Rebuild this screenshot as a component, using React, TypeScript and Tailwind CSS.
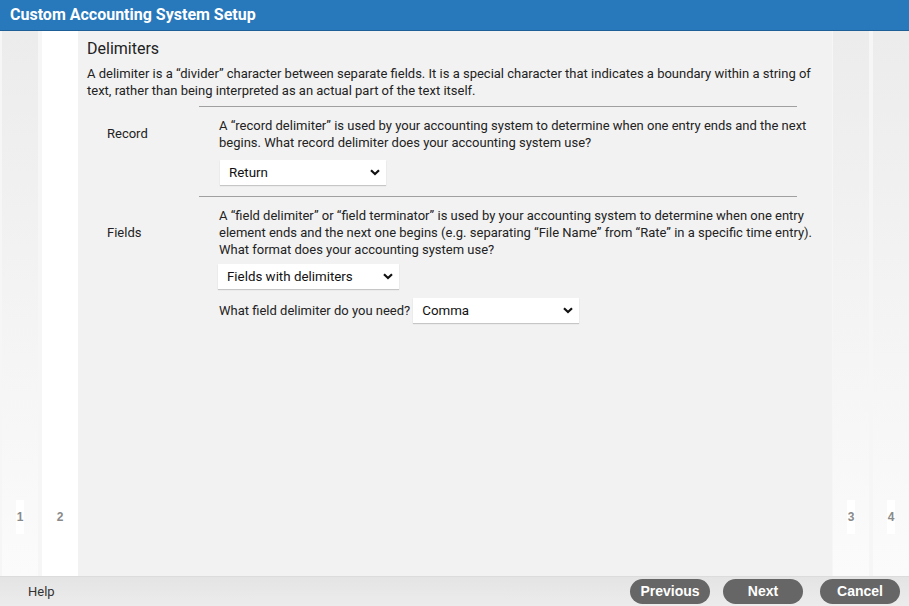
import React from "react";

function Chevron() {
  return (
    <svg width="10" height="7" viewBox="0 0 10 7" className="shrink-0">
      <path d="M1 1.2 L5 5 L9 1.2" fill="none" stroke="#111" strokeWidth="2.2" />
    </svg>
  );
}

function Select({ value, width }: { value: string; width: string }) {
  return (
    <div
      className={`${width} h-[25px] bg-white flex items-center justify-between pl-[9px] pr-[6px] text-[13.33px] font-normal text-[#111] shadow-[0_1px_1px_rgba(0,0,0,0.18)]`}
    >
      <span>{value}</span>
      <Chevron />
    </div>
  );
}

function Tab({ n, active }: { n: number; active?: boolean }) {
  return (
    <div
      className={`w-[36px] flex flex-col items-center justify-end pb-[42px] ${
        active ? "bg-white" : "bg-gradient-to-b from-[#ececec] to-[#fbfbfb]"
      }`}
    >
      <div className="w-[8px] h-[34px] bg-white flex items-center justify-center text-[12px] font-bold text-[#8a8a8a] font-['Liberation_Sans',sans-serif]">
        {n}
      </div>
    </div>
  );
}

export default function App() {
  return (
    <div className="w-[909px] h-[606px] flex flex-col bg-[#f4f4f4] font-['Roboto',sans-serif] text-[#333] overflow-hidden">
      {/* Header */}
      <div className="h-[31px] shrink-0 bg-[#2878bc] border-b border-[#1e5f98] flex items-center pl-[10px]">
        <h1 className="text-white text-[16px] font-bold font-['Roboto',sans-serif]">Custom Accounting System Setup</h1>
      </div>

      {/* Body */}
      <div className="flex-1 flex min-h-0">
        <div className="w-[2px] bg-[#f6f6f6]" />
        <Tab n={1} />
        <div className="w-[4px] bg-[#f6f6f6]" />
        <Tab n={2} active />

        <div className="flex-1 bg-[#f2f2f2] pl-[9px] pr-[9px] pt-[8px]">
          <h2 className="text-[16px] text-[#222] leading-[20px]">Delimiters</h2>
          <p className="text-[13px] leading-[17px] text-[#222] mt-[6px]">
            A delimiter is a “divider” character between separate fields. It is a special character that indicates a boundary within a string of text, rather than being interpreted as an actual part of the text itself.
          </p>
          <div className="ml-[112px] w-[598px] h-px bg-[#a0a0a0] mt-[7px]" />

          {/* Record */}
          <div className="flex mt-[10px]">
            <div className="w-[132px] shrink-0 pl-[20px] flex items-center h-[34px] text-[13px] text-[#222]">Record</div>
            <div className="flex-1">
              <p className="text-[13px] leading-[17px] text-[#222]">
                A “record delimiter” is used by your accounting system to determine when one entry ends and the next begins. What record delimiter does your accounting system use?
              </p>
              <div className="mt-[9px] ml-[1px]">
                <Select value="Return" width="w-[166px]" />
              </div>
            </div>
          </div>
          <div className="ml-[112px] w-[598px] h-px bg-[#a0a0a0] mt-[11px]" />

          {/* Fields */}
          <div className="flex mt-[10px]">
            <div className="w-[132px] shrink-0 pl-[20px] flex items-center h-[51px] text-[13px] text-[#222]">Fields</div>
            <div className="flex-1">
              <p className="text-[13px] leading-[17px] text-[#222]">
                A “field delimiter” or “field terminator” is used by your accounting system to determine when one entry element ends and the next one begins (e.g. separating “File Name” from “Rate” in a specific time entry). What format does your accounting system use?
              </p>
              <div className="mt-[6px] -ml-[1px]">
                <Select value="Fields with delimiters" width="w-[181px]" />
              </div>
              <div className="mt-[9px] flex items-center text-[13px] text-[#222]">
                <span className="mr-[3px]">What field delimiter do you need?</span>
                <Select value="Comma" width="w-[166px]" />
              </div>
            </div>
          </div>
        </div>

        <div className="w-[1px] bg-[#f6f6f6]" />
        <Tab n={3} />
        <div className="w-[4px] bg-[#f6f6f6]" />
        <Tab n={4} />
      </div>

      {/* Footer */}
      <div className="h-[30px] shrink-0 bg-gradient-to-b from-[#e4e4e4] to-[#ececec] flex items-center border-t border-[#dcdcdc]">
        <span className="ml-[28px] text-[13px] text-[#333]">Help</span>
        <div className="ml-auto flex items-center mr-[9px]">
          <button className="w-[80px] h-[25px] rounded-full bg-[#666] text-white text-[14px] font-bold font-['Liberation_Sans',sans-serif]">Previous</button>
          <button className="ml-[13px] w-[80px] h-[25px] rounded-full bg-[#666] text-white text-[14px] font-bold font-['Liberation_Sans',sans-serif]">Next</button>
          <button className="ml-[17px] w-[80px] h-[25px] rounded-full bg-[#666] text-white text-[14px] font-bold font-['Liberation_Sans',sans-serif]">Cancel</button>
        </div>
      </div>
    </div>
  );
}
